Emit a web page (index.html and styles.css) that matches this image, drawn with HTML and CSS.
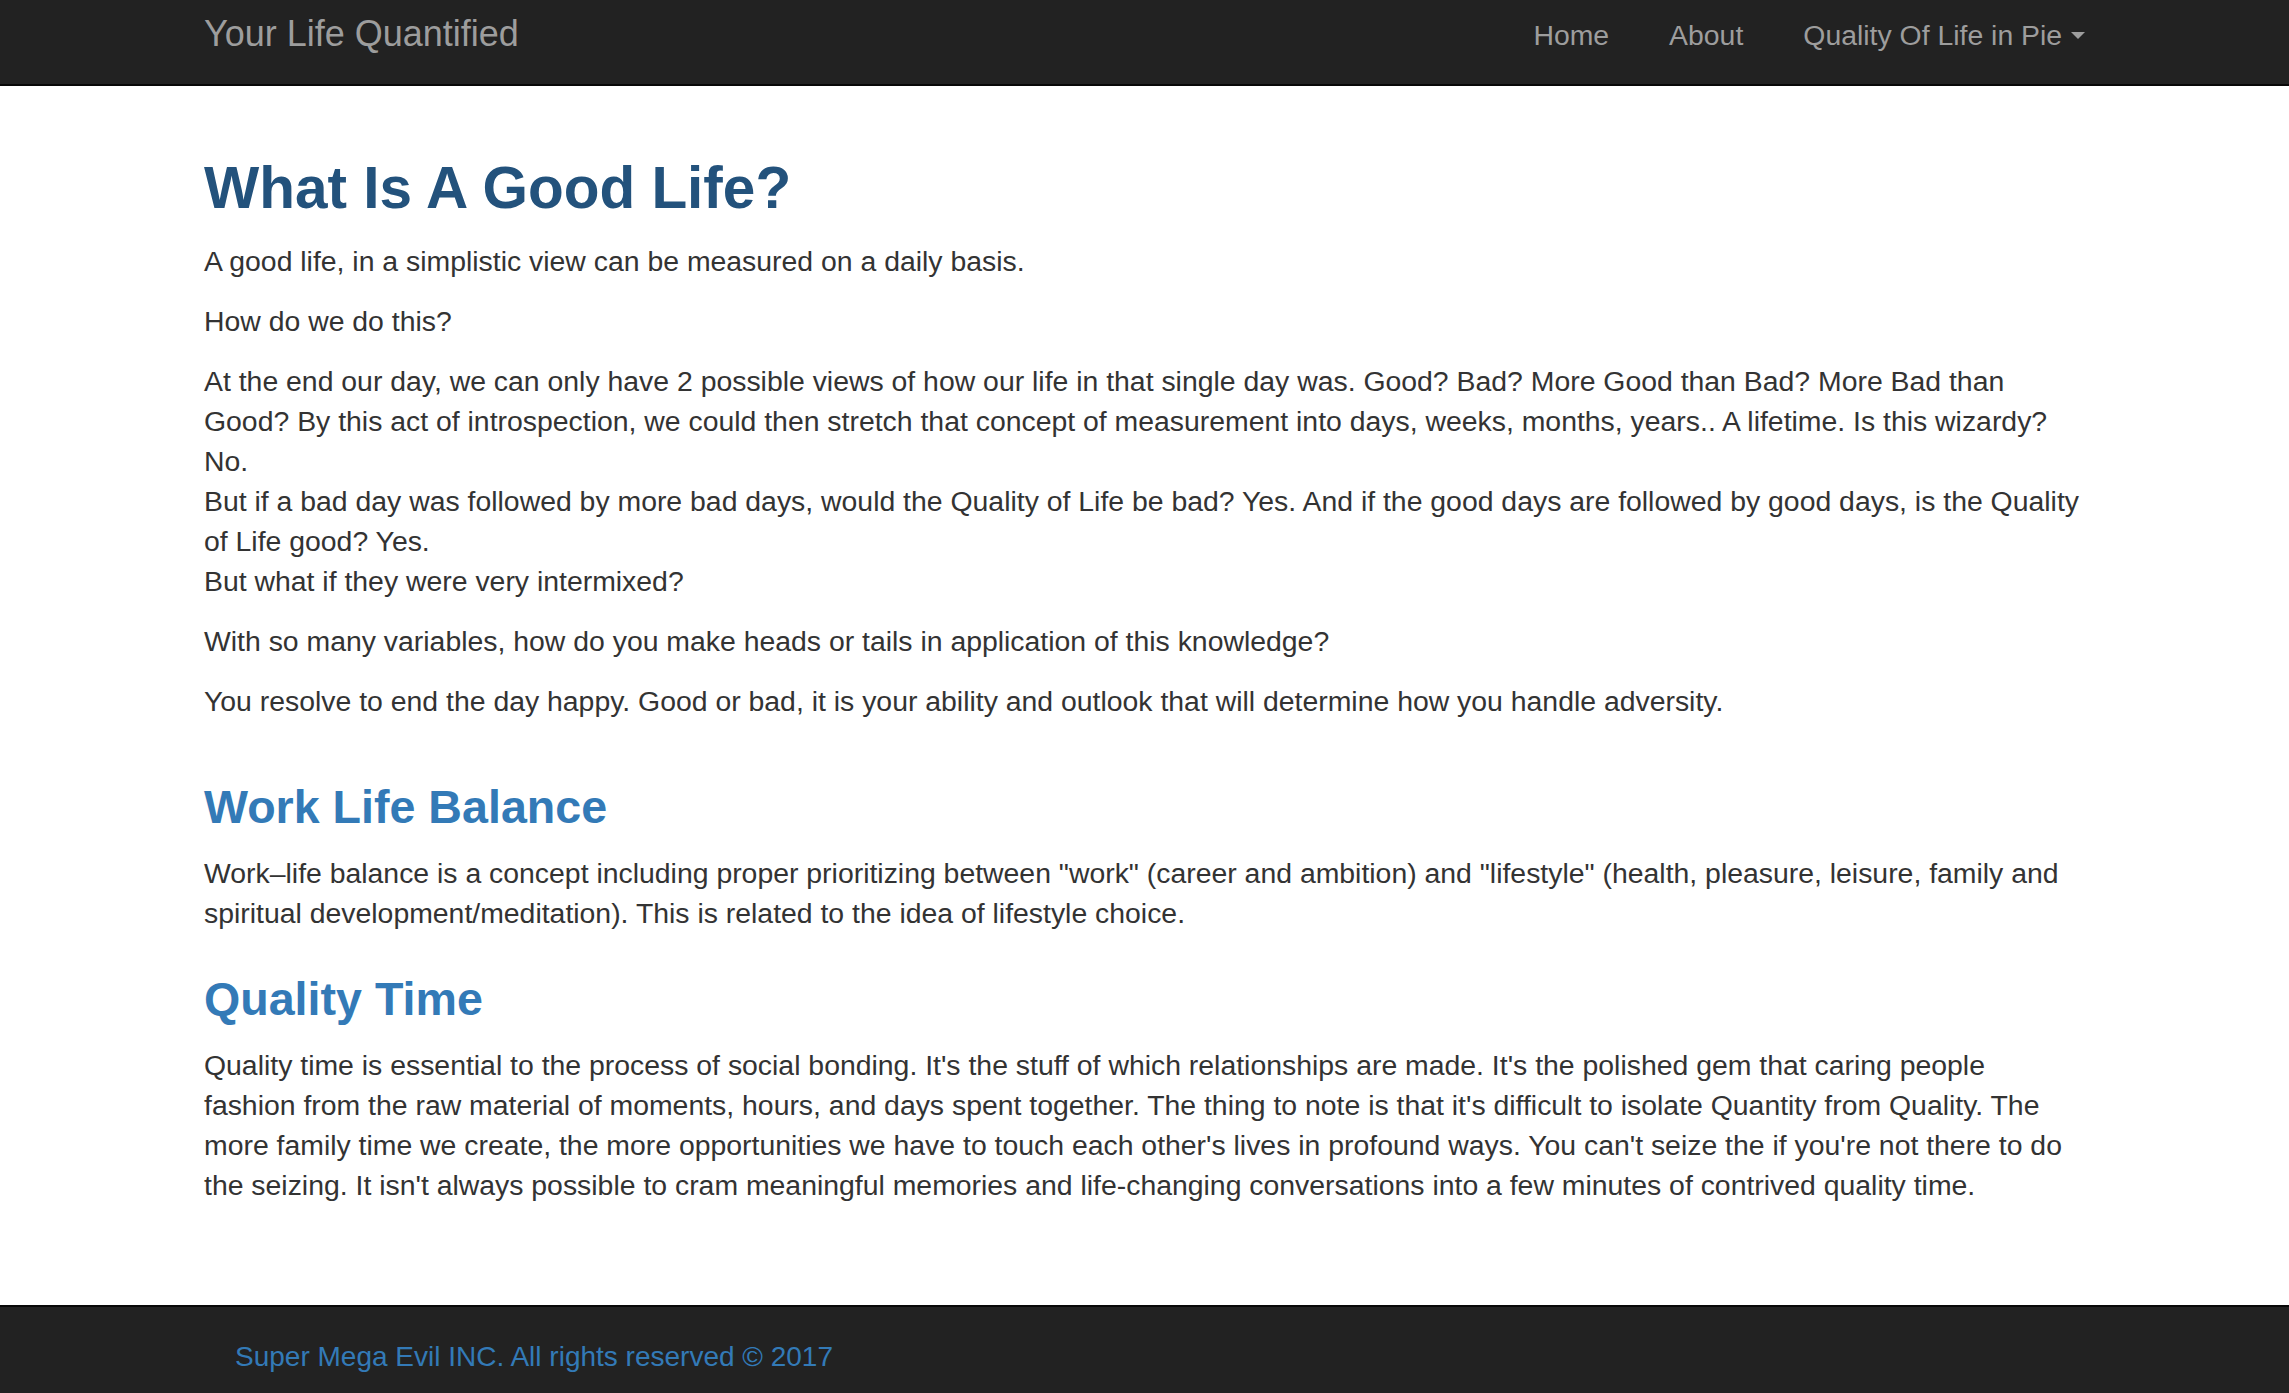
FILE: index.html
```html
<!DOCTYPE html>
<html lang="en">
<head>
<meta charset="utf-8">
<title>Your Life Quantified</title>
<link rel="stylesheet" href="styles.css">
</head>
<body>
<nav class="navbar">
  <div class="container navbar-inner">
    <a class="brand" href="#">Your Life Quantified</a>
    <ul class="nav">
      <li><a href="#">Home</a></li>
      <li><a href="#">About</a></li>
      <li><a href="#" class="dropdown">Quality Of Life in Pie <span class="caret"></span></a></li>
    </ul>
  </div>
</nav>

<main class="container content">
  <section class="intro">
    <h1 class="title">What Is A Good Life?</h1>
    <p>A good life, in a simplistic view can be measured on a daily basis.</p>
    <p>How do we do this?</p>
    <p>At the end our day, we can only have 2 possible views of how our life in that single day was. Good? Bad? More Good than Bad? More Bad than Good? By this act of introspection, we could then stretch that concept of measurement into days, weeks, months, years.. A lifetime. Is this wizardy? No.<br>But if a bad day was followed by more bad days, would the Quality of Life be bad? Yes. And if the good days are followed by good days, is the Quality of Life good? Yes.<br>But what if they were very intermixed?</p>
    <p>With so many variables, how do you make heads or tails in application of this knowledge?</p>
    <p>You resolve to end the day happy. Good or bad, it is your ability and outlook that will determine how you handle adversity.</p>
  </section>
  <section class="topic">
    <h2 class="subtitle">Work Life Balance</h2>
    <p>Work–life balance is a concept including proper prioritizing between "work" (career and ambition) and "lifestyle" (health, pleasure, leisure, family and spiritual development/meditation). This is related to the idea of lifestyle choice.</p>
    <h2 class="subtitle">Quality Time</h2>
    <p>Quality time is essential to the process of social bonding. It's the stuff of which relationships are made. It's the polished gem that caring people fashion from the raw material of moments, hours, and days spent together. The thing to note is that it's difficult to isolate Quantity from Quality. The more family time we create, the more opportunities we have to touch each other's lives in profound ways. You can't seize the if you're not there to do the seizing. It isn't always possible to cram meaningful memories and life-changing conversations into a few minutes of contrived quality time.</p>
  </section>
</main>

<footer class="footer">
  <div class="container">
    <p class="copyright">Super Mega Evil INC. All rights reserved © 2017</p>
  </div>
</footer>
</body>
</html>
```

FILE: styles.css
```css
* { box-sizing: border-box; }

html, body {
  margin: 0;
  padding: 0;
}

body {
  font-family: "Liberation Sans", Arial, Helvetica, sans-serif;
  font-size: 28.4px;
  line-height: 40px;
  color: #333333;
  background: #ffffff;
}

a { text-decoration: none; }

.container {
  width: 1881px;
  margin: 0 auto;
}

/* navbar */
.navbar {
  background: #222222;
  border-bottom: 2px solid #080808;
  height: 86px;
}

.navbar-inner {
  display: flex;
  justify-content: space-between;
  align-items: flex-start;
}

.brand {
  display: block;
  color: #9d9d9d;
  font-size: 36px;
  line-height: 40px;
  padding-top: 14px;
}

.nav {
  list-style: none;
  margin: 0 -30px 0 0;
  padding: 0;
  display: flex;
}

.nav a {
  display: block;
  color: #9d9d9d;
  font-size: 28.4px;
  line-height: 40px;
  padding: 15px 30px 0;
}

.caret {
  display: inline-block;
  width: 0;
  height: 0;
  margin-left: 1px;
  vertical-align: middle;
  border-top: 7px solid #9d9d9d;
  border-left: 7px solid transparent;
  border-right: 7px solid transparent;
  position: relative;
  top: -2px;
}

/* content */
.content {
  padding-top: 69px;
  padding-bottom: 100px;
}

.content p {
  margin: 0 3px 20px 0;
}

.intro {
  display: flow-root;
}

.topic > p:last-child {
  margin-bottom: 0;
}

.title {
  font-size: 58.5px;
  line-height: 66px;
  font-weight: 700;
  color: #23527c;
  margin: 0 0 20px;
}

.subtitle {
  font-size: 46.6px;
  line-height: 52px;
  font-weight: 700;
  color: #337ab7;
  margin: 40px 0 20px;
}

/* footer */
.footer {
  background: #222222;
  border-top: 2px solid #080808;
  padding: 30px 0 24px;
}

.copyright {
  margin: 0;
  padding-left: 31px;
  color: #337ab7;
  font-size: 28px;
  line-height: 40px;
}
```
